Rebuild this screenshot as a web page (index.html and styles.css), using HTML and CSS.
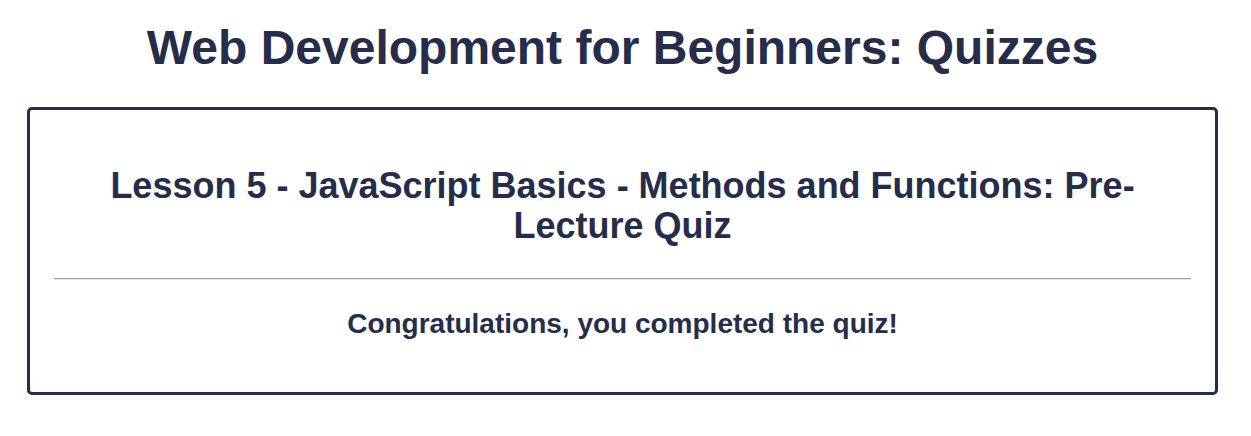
FILE: index.html
```html
<!DOCTYPE html>
<html lang="en">
<head>
<meta charset="utf-8">
<title>Quizzes</title>
<link rel="stylesheet" href="styles.css">
</head>
<body>
<div class="app">
  <h1 class="title">Web Development for Beginners: Quizzes</h1>
  <div class="card">
    <h2 class="lesson">Lesson 5 - JavaScript Basics - Methods and Functions: Pre-Lecture Quiz</h2>
    <hr class="rule">
    <p class="done">Congratulations, you completed the quiz!</p>
  </div>
</div>
</body>
</html>
```

FILE: styles.css
```css
html, body {
  margin: 0;
  padding: 0;
  background: #fff;
}
body {
  font-family: "Liberation Sans", Arial, sans-serif;
  color: #252d4a;
}
.app {
  padding: 0 33px 0 27px;
}
.title {
  margin: 0;
  padding-top: 20px;
  height: 107px;
  box-sizing: border-box;
  text-align: center;
  font-size: 48px;
  font-weight: bold;
  line-height: 55px;
}
.card {
  border: 3px solid #252d4a;
  border-radius: 5px;
  padding: 0 24px;
  height: 288px;
  box-sizing: border-box;
}
.lesson {
  margin: 0;
  padding-top: 56px;
  text-align: center;
  font-size: 36px;
  line-height: 40px;
  font-weight: bold;
}
.rule {
  margin: 32px 0 0;
  border: 0;
  border-top: 1px solid #a0a0a0;
  border-bottom: 1px solid #e6e6e6;
}
.done {
  margin: 0;
  padding-top: 28px;
  text-align: center;
  font-size: 28px;
  line-height: 32px;
  font-weight: bold;
}
```
